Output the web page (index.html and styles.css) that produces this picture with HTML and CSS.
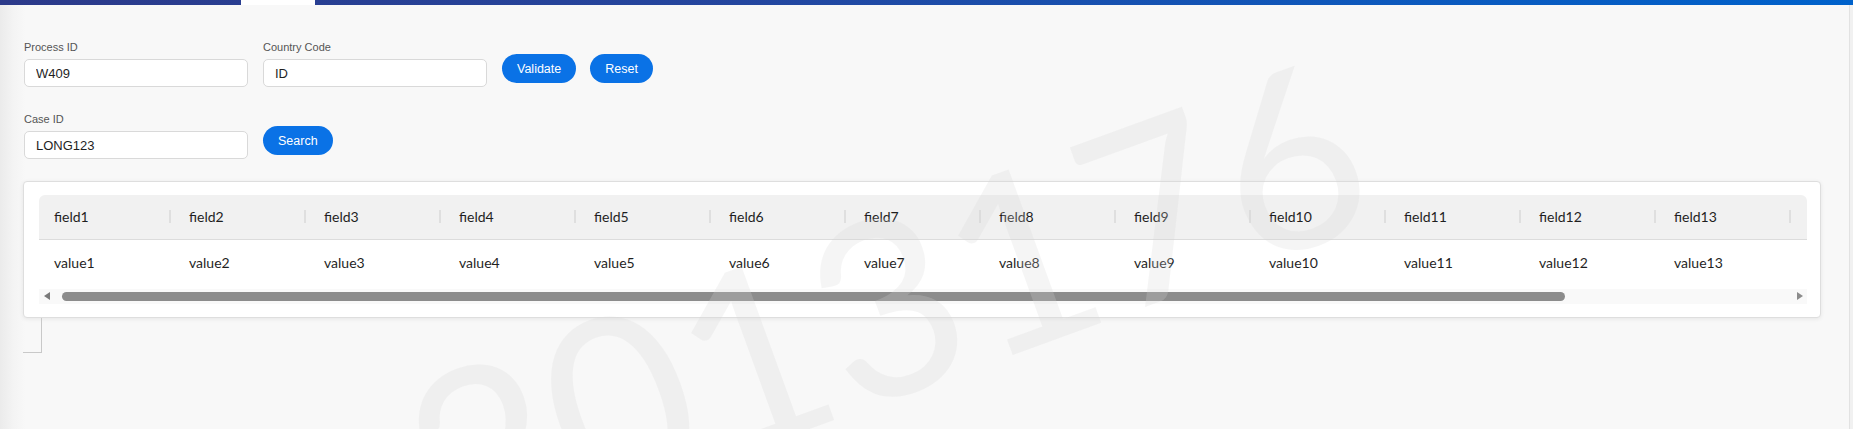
FILE: index.html
```html
<!DOCTYPE html>
<html lang="en">
<head>
<meta charset="utf-8">
<title>Process lookup</title>
<link rel="stylesheet" href="styles.css">
</head>
<body>
<div class="topbar"><div class="topbar-tab"></div></div>
<div class="shell">
  <main class="page">
    <div class="form-row">
      <div class="field">
        <label class="field-label">Process ID</label>
        <input class="field-input" type="text" value="W409">
      </div>
      <div class="field">
        <label class="field-label">Country Code</label>
        <input class="field-input" type="text" value="ID">
      </div>
      <button class="btn" type="button">Validate</button>
      <button class="btn" type="button">Reset</button>
    </div>
    <div class="form-row">
      <div class="field">
        <label class="field-label">Case ID</label>
        <input class="field-input" type="text" value="LONG123">
      </div>
      <button class="btn" type="button">Search</button>
    </div>

    <section class="card">
      <div class="table-viewport">
        <table class="data-table">
          <thead>
            <tr>
              <th>field1</th><th>field2</th><th>field3</th><th>field4</th><th>field5</th>
              <th>field6</th><th>field7</th><th>field8</th><th>field9</th><th>field10</th>
              <th>field11</th><th>field12</th><th>field13</th><th>field14</th><th>field15</th>
            </tr>
          </thead>
          <tbody>
            <tr>
              <td>value1</td><td>value2</td><td>value3</td><td>value4</td><td>value5</td>
              <td>value6</td><td>value7</td><td>value8</td><td>value9</td><td>value10</td>
              <td>value11</td><td>value12</td><td>value13</td><td>value14</td><td>value15</td>
            </tr>
          </tbody>
        </table>
      </div>
      <div class="hscroll">
        <span class="hscroll-btn"><span class="arrow-left"></span></span>
        <div class="hscroll-rail"><div class="hscroll-thumb"></div></div>
        <span class="hscroll-btn"><span class="arrow-right"></span></span>
      </div>
    </section>
    <div class="bracket"></div>
  </main>
  <div class="vscroll"></div>
</div>
<div class="watermark">2013176</div>
</body>
</html>
```
FILE: styles.css
```css
* { box-sizing: border-box; }

html, body {
  margin: 0;
  height: 100%;
}

body {
  position: relative;
  overflow: hidden;
  background: linear-gradient(to right, #ebebeb 0, #f4f4f4 14px, #f8f8f8 26px, #f8f8f8 100%);
  font-family: "Liberation Sans", Arial, sans-serif;
  color: #1f1f1f;
}

.topbar {
  height: 5px;
  background: linear-gradient(to right, #2c3a8a 0%, #24469f 40%, #0d59bd 75%, #0062cb 100%);
}

.topbar-tab {
  margin-left: 241px;
  width: 74px;
  height: 100%;
  background: #ffffff;
}

.shell {
  display: flex;
  height: calc(100% - 5px);
}

.page {
  flex: 1;
  min-width: 0;
  padding: 35px 28px 0 23px;
}

.vscroll {
  width: 4px;
  background: #f1f1f1;
  border-left: 1px solid #e2e2e2;
}

.form-row {
  display: flex;
  align-items: flex-end;
  gap: 15px;
  padding-left: 1px;
  margin-bottom: 25px;
}

.field {
  display: flex;
  flex-direction: column;
  width: 224px;
}

.field-label {
  font-size: 11px;
  line-height: 15px;
  color: #555555;
  margin-bottom: 4px;
}

.field-input {
  height: 28px;
  width: 100%;
  border: 1px solid #d9d9d9;
  border-radius: 5px;
  background: #ffffff;
  padding: 0 11px;
  font-family: inherit;
  font-size: 13px;
  color: #1f1f1f;
  outline: none;
}

.btn {
  height: 29px;
  margin-bottom: 4px;
  padding: 0 15px;
  border: none;
  border-radius: 15px;
  background: #0a72e6;
  color: #ffffff;
  font-family: inherit;
  font-size: 12.5px;
  cursor: pointer;
}

.form-row .btn + .btn { margin-left: -1px; }

.card {
  margin-top: -3px;
  width: 100%;
  background: #ffffff;
  border: 1px solid #dedede;
  border-radius: 4px;
  box-shadow: 0 1px 4px rgba(0, 0, 0, 0.08);
  padding: 13px 13px 13px 15px;
}

.table-viewport {
  overflow: hidden;
  border-radius: 6px;
}

.data-table {
  border-collapse: collapse;
  table-layout: fixed;
  width: 2025px;
  font-family: Lato, "Open Sans", sans-serif;
  font-size: 14px;
  color: #1f1f1f;
}

.data-table th,
.data-table td {
  width: 135px;
  text-align: left;
  font-weight: 400;
  white-space: nowrap;
}

.data-table th {
  position: relative;
  height: 44px;
  padding: 0 15px;
  background: #f1f1f1;
  border-bottom: 1px solid #dcdcdc;
  line-height: 22px;
}

.data-table th::before {
  content: "";
  position: absolute;
  right: 3px;
  top: 50%;
  width: 2px;
  height: 13px;
  margin-top: -7px;
  background: #dfdfdf;
}

.data-table td {
  padding: 12px 15px 15px;
  line-height: 22px;
  background: #ffffff;
}

.hscroll {
  display: flex;
  align-items: center;
  height: 15px;
  background: #f9f9f9;
}

.hscroll-btn {
  width: 15px;
  height: 15px;
  display: flex;
  align-items: center;
  justify-content: center;
}

.arrow-left {
  width: 0;
  height: 0;
  border-top: 4px solid transparent;
  border-bottom: 4px solid transparent;
  border-right: 6px solid #7a7a7a;
}

.arrow-right {
  width: 0;
  height: 0;
  border-top: 4px solid transparent;
  border-bottom: 4px solid transparent;
  border-left: 6px solid #8c8c8c;
}

.hscroll-rail {
  flex: 1;
  height: 9px;
}

.hscroll-thumb {
  margin-left: 8px;
  width: 1503px;
  height: 9px;
  border-radius: 5px;
  background: #8c8c8c;
}

.bracket {
  width: 19px;
  height: 35px;
  border-right: 1px solid #c9c9c9;
  border-bottom: 1px solid #c9c9c9;
}

.watermark {
  position: absolute;
  left: 885px;
  top: 301px;
  transform: translate(-50%, -50%) rotate(-20deg);
  font-family: Lato, "Open Sans", sans-serif;
  font-weight: 400;
  font-size: 245px;
  line-height: 1;
  color: rgba(212, 212, 212, 0.24);
  white-space: nowrap;
  pointer-events: none;
}
```
